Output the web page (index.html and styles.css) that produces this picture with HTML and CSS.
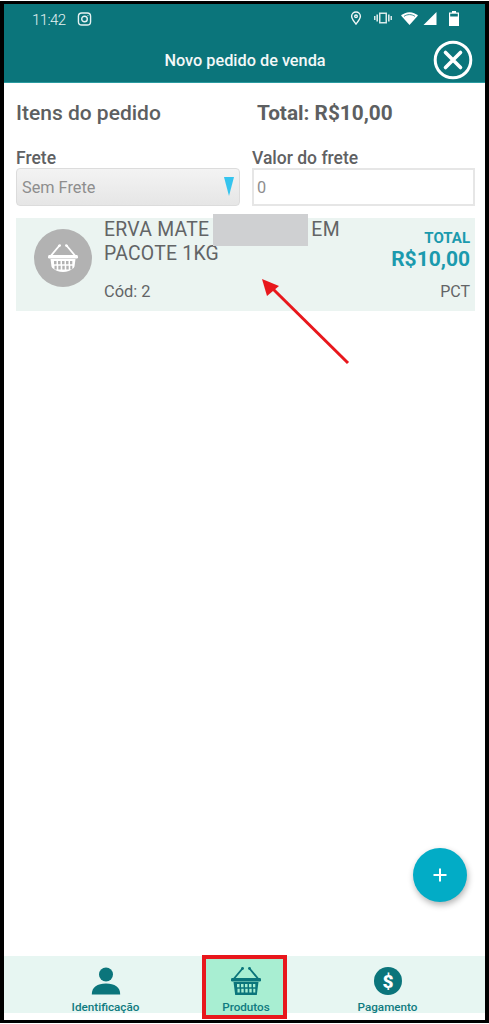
FILE: index.html
```html
<!DOCTYPE html>
<html lang="pt">
<head>
<meta charset="utf-8">
<title>Novo pedido de venda</title>
<link rel="stylesheet" href="styles.css">
</head>
<body>
<div class="frame">
  <header class="header">
    <div class="status">
      <div class="status-left">
        <span class="time">11:42</span>
        <svg class="ig" width="15" height="14" viewBox="0 0 15 15" fill="none" stroke="#e6f2f2" stroke-width="1.5"><rect x="1" y="1" width="13" height="13" rx="3.6"/><circle cx="7.5" cy="7.5" r="3"/><circle cx="11.2" cy="3.8" r=".6" fill="#e6f2f2" stroke="none"/></svg>
      </div>
      <div class="status-right">
        <svg width="12" height="14" viewBox="0 0 12 15" fill="none" stroke="#f1f7f7" stroke-width="1.5"><path d="M6 14C3.6 10.800 1.300 8.400 1.300 5.700a4.700 4.700 0 0 1 9.400 0C10.700 8.400 8.400 10.800 6 14z"/><circle cx="6" cy="5.700" r="1.400"/></svg>
        <svg width="18" height="12" viewBox="0 0 18 12" fill="#d8e9e9"><path d="M5 .5h8v11H5zM6.500 2v8h5V2z" fill-rule="evenodd"/><rect x="2.400" y="2.500" width="1.600" height="7"/><rect x="14" y="2.500" width="1.600" height="7"/><rect x="0" y="4" width="1.500" height="4"/><rect x="16.500" y="4" width="1.500" height="4"/></svg>
        <svg width="17" height="13" viewBox="0 0 17 13" fill="#fff"><path d="M8.500 13L0 3.600C2.300 1.500 5.200.2 8.500.2s6.200 1.300 8.500 3.400z"/><path d="M3 4.400C4.500 3.300 6.400 2.600 8.500 2.600s4 .7 5.500 1.800" fill="none" stroke="#0b757b" stroke-width=".8"/></svg>
        <svg width="14" height="13" viewBox="0 0 14 14" fill="#fff"><path d="M14 0v14H0z"/></svg>
        <svg width="10" height="15" viewBox="0 0 10 15" fill="#fff"><path d="M3 0h4v1.500h3V15H0V1.500h3z"/><path d="M1.200 2.700h7.600v2.800H1.200z" fill="#0b757b"/></svg>
      </div>
    </div>
    <div class="titlebar">
      <h1 class="title">Novo pedido de venda</h1>
      <svg class="close" width="40" height="40" viewBox="0 0 40 40" fill="none" stroke="#fff"><circle cx="20" cy="20" r="17.800" stroke-width="3"/><path d="M12.500 12.500l15 15M27.500 12.500l-15 15" stroke-width="3.600" stroke-linecap="round"/></svg>
    </div>
  </header>

  <main class="content">
    <div class="summary">
      <h2 class="items-title">Itens do pedido</h2>
      <div class="total">Total: R$10,00</div>
    </div>

    <div class="fields">
      <div class="field field-left">
        <label class="label">Frete</label>
        <div class="select">
          <span>Sem Frete</span>
          <svg class="arrow" width="10" height="19" viewBox="0 0 10 19"><path d="M0 0h10L5 19z" fill="#35c4ee"/></svg>
        </div>
      </div>
      <div class="field field-right">
        <label class="label">Valor do frete</label>
        <div class="input">0</div>
      </div>
    </div>

    <article class="item">
      <div class="item-icon">
        <svg class="basket basket-white" viewBox="0 0 30 28"><use href="#basket"/></svg>
      </div>
      <div class="item-text">
        <div class="item-name">ERVA MATE <span class="blank"></span> EM<br>PACOTE 1KG</div>
        <div class="item-code">Cód: 2</div>
      </div>
      <div class="item-side">
        <div class="side-label">TOTAL</div>
        <div class="side-value">R$10,00</div>
        <div class="side-unit">PCT</div>
      </div>
      <div class="redact"></div>
    </article>

    <svg class="red-arrow" width="90" height="88" viewBox="0 0 90 88"><path d="M87 85L12 11" stroke="#e8171c" stroke-width="3" fill="none"/><path d="M1 1l17 7L6 18z" fill="#e8171c"/></svg>

    <button class="fab" type="button"><svg width="16" height="16" viewBox="0 0 16 16"><path d="M8 1.500v13M1.500 8h13" stroke="#fff" stroke-width="2"/></svg></button>
  </main>

  <nav class="tabs">
    <div class="tab tab-first">
      <svg width="30" height="28" viewBox="0 0 30 28" fill="#0b757b"><circle cx="15" cy="7.500" r="7"/><path d="M.800 27.500c0-7.500 5.500-11 14.200-11s14.200 3.500 14.200 11z"/></svg>
      <span>Identificação</span>
    </div>
    <div class="tab tab-active">
      <svg class="basket basket-teal" width="30" height="28" viewBox="0 0 30 28"><use href="#basket"/></svg>
      <span>Produtos</span>
    </div>
    <div class="tab tab-last">
      <svg width="28" height="28" viewBox="0 0 28 28"><circle cx="14" cy="14" r="14" fill="#0b757b"/><text x="14" y="20.500" text-anchor="middle" class="dollar">$</text></svg>
      <span>Pagamento</span>
    </div>
  </nav>
</div>

<svg class="defs" width="0" height="0">
  <defs>
    <g id="basket">
      <path d="M11.500 1.500L3.500 11M18.500 1.500l8 9.500" fill="none" stroke="currentColor" stroke-width="1.900" stroke-linecap="round"/>
      <circle cx="11.500" cy="1.500" r="1.400" fill="currentColor"/>
      <circle cx="18.500" cy="1.500" r="1.400" fill="currentColor"/>
      <rect x="0" y="11" width="30" height="3.400" rx="1.200" fill="currentColor"/>
      <path fill="currentColor" fill-rule="evenodd" d="M2.500 15h25l-1.700 13H4.200zM6 17v3.300h2.500V17zm4 0v3.300h2.500V17zm4 0v3.300h2.500V17zm4 0v3.300h2.500V17zm4 0v3.300h2.300V17zM6.500 21.800v3.700h2.200v-3.700zm3.800 0v3.700h2.400v-3.700zm4 0v3.700h2.400v-3.700zm4 0v3.700h2.400v-3.700zm4 0v3.700h2v-3.700z"/>
    </g>
  </defs>
</svg>
</body>
</html>
```

FILE: styles.css
```css
* { box-sizing: border-box; }
html, body { margin: 0; padding: 0; background: #fff; }
body { width: 489px; height: 1024px; overflow: hidden; font-family: Roboto, "Noto Sans", sans-serif; }
.defs { display: block; height: 0; }

.frame {
  width: 489px;
  height: 1022px;
  margin-top: 1px;
  border: solid #000;
  border-width: 3px 4px 3px 4px;
  display: flex;
  flex-direction: column;
  background: #fff;
}

.header { background: #0b757b; height: 79px; border-bottom: 1px solid #2a9ba0; flex: none; }
.status { height: 31px; display: flex; justify-content: space-between; align-items: center; padding: 0 26px 0 28px; }
.status-left { display: flex; align-items: center; gap: 12px; }
.time { color: #e6f2f2; font-size: 15px; font-weight: 300; letter-spacing: -.6px; }
.ig { margin-top: -1px; }
.status-right { display: flex; align-items: center; margin-top: -3px; }
.status-right svg:nth-child(1) { margin-right: -1px; }
.status-right svg:nth-child(2) { margin-left: 13px; }
.status-right svg:nth-child(3) { margin-left: 9px; }
.status-right svg:nth-child(4) { margin-left: 5px; }
.status-right svg:nth-child(5) { margin-left: 12px; }

.titlebar { position: relative; height: 47px; display: flex; align-items: center; justify-content: center; padding-top: 4px; }
.title { margin: 0 0 0 1px; color: #f3f8f8; font-size: 16.300px; font-weight: 500; }
.close { position: absolute; right: 12px; top: 5px; }

.content { position: relative; flex: 1; padding: 0 10px 0 12px; }

.summary { display: flex; height: 43px; padding-top: 18px; line-height: 25px; }
.items-title { margin: 0; width: 241px; font-size: 21px; line-height: 25px; font-weight: 500; color: #5d5f61; }
.total { font-size: 20.800px; font-weight: 700; color: #5d5f61; }

.fields { display: flex; margin-top: 22px; gap: 12px; }
.field { display: flex; flex-direction: column; }
.field-left { width: 224px; }
.field-right { width: 223px; }
.label { font-size: 17.500px; font-weight: 500; color: #5f6163; height: 20px; line-height: 20px; }
.select {
  height: 38px;
  border: 1px solid #dcdcdc;
  border-radius: 4px;
  background: linear-gradient(#f3f3f3, #e6e6e6);
  color: #8e8e8e;
  font-size: 16.300px;
  display: flex;
  align-items: center;
  justify-content: space-between;
  padding: 0 5px;
}
.arrow { margin-top: -1px; }
.input {
  height: 38px;
  border: 2px solid #e6e6e6;
  color: #8e8e8e;
  font-size: 16.300px;
  display: flex;
  align-items: center;
  padding: 0 3px;
}

.item {
  position: relative;
  margin-top: 12px;
  height: 93px;
  background: #ebf4f1;
  display: flex;
}
.item-icon { width: 88px; flex: none; padding: 11px 0 0 18px; }
.basket { display: block; }
.basket-white { width: 58px; height: 58px; padding: 15px 14px; background: #b2b2b2; border-radius: 50%; color: #fff; }
.basket-teal { color: #0b757b; }
.item-text { flex: 1; color: #626466; display: flex; flex-direction: column; }
.item-name { font-size: 19.400px; line-height: 24px; height: 60px; white-space: nowrap; letter-spacing: .25px; }
.blank { display: inline-block; width: 92px; }
.item-code { font-size: 16.400px; margin-top: 5px; line-height: 18px; }
.item-side { width: 110px; flex: none; padding-right: 5px; text-align: right; }
.side-label { color: #1b9aae; font-size: 15px; font-weight: 700; line-height: 16px; margin-top: 12px; }
.side-value { color: #1b9aae; font-size: 21px; font-weight: 700; line-height: 26px; margin-top: 0; }
.side-unit { color: #626466; font-size: 16px; line-height: 18px; margin-top: 11px; }
.redact { position: absolute; left: 197px; top: -4px; width: 95px; height: 32px; background: #cfd0d2; }

.red-arrow { position: absolute; left: 257px; top: 195px; }

.fab {
  position: absolute;
  left: 409px;
  top: 765px;
  width: 54px;
  height: 54px;
  border: 0;
  padding: 0;
  border-radius: 50%;
  background: #02acc6;
  box-shadow: 1px 3px 6px rgba(0,0,0,.3);
  display: flex;
  align-items: center;
  justify-content: center;
}

.tabs {
  flex: none;
  height: 57px;
  margin-bottom: 7px;
  background: #e7f6f2;
  display: flex;
  align-items: flex-start;
}
.tab { display: flex; flex-direction: column; align-items: center; padding-top: 11px; color: #0f7b80; font-size: 11.700px; font-weight: 500; }
.tab span { margin-top: 5px; line-height: 14px; }
.tab svg { display: block; }
.tab-first { width: 198px; padding-left: 5px; }
.tab-active {
  width: 85px;
  height: 64px;
  margin-top: -1px;
  padding: 12px 0 0 3px;
  flex: none;
  background: #a8eed2;
  outline: 4px solid #e8171c;
  outline-offset: -4px;
}
.tab-last { flex: 1; padding-left: 3px; }
.dollar { fill: #fff; font-size: 19px; font-weight: 900; font-family: Roboto, sans-serif; }
```
